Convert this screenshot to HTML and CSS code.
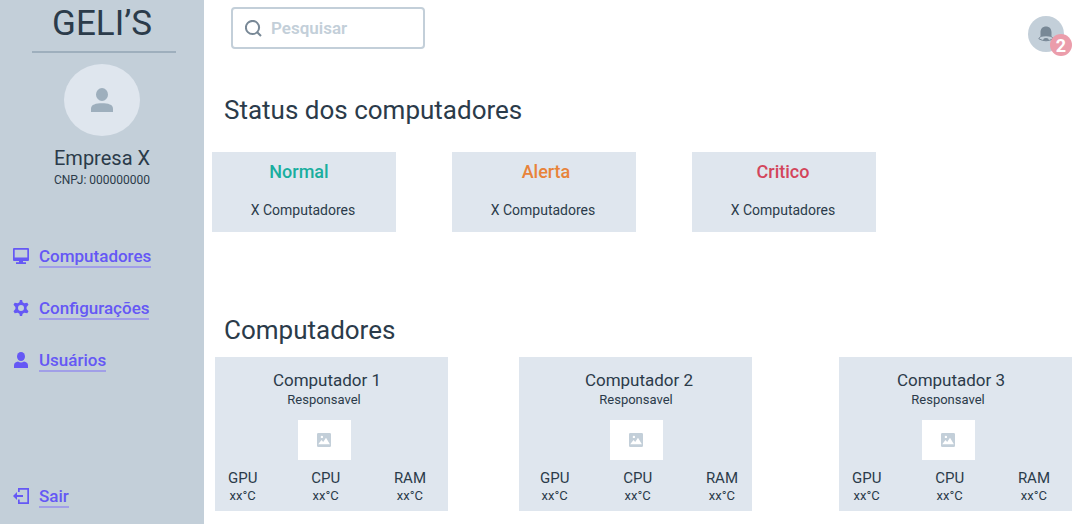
FILE: index.html
```html
<!DOCTYPE html>
<html lang="pt-BR">
<head>
<meta charset="utf-8">
<meta name="viewport" content="width=device-width, initial-scale=1">
<title>GELI’S</title>
<link rel="stylesheet" href="styles.css">
</head>
<body>
<svg class="sprite" aria-hidden="true">
  <symbol id="picture" viewBox="0 0 14 14">
    <path fill="currentColor" fill-rule="evenodd" d="M1.300 0H12.700Q14 0 14 1.300V12.700Q14 14 12.700 14H1.300Q0 14 0 12.700V1.300Q0 0 1.300 0ZM1.200 11.300H12.900L9 4.800L6.200 9L4.500 7ZM4.900 2.700A1.200 1.200 0 1 0 4.900 5.100A1.200 1.200 0 1 0 4.900 2.700Z"/>
  </symbol>
</svg>
<aside class="sidebar">
  <h1 class="brand">GELI’S</h1>
  <div class="company">
    <div class="avatar">
      <svg width="22" height="24" viewBox="0 0 22 24" aria-hidden="true"><ellipse cx="11" cy="6.500" rx="6" ry="6.500"/><path d="M0 24V20.500C0 16.500 5 15.200 11 15.200S22 16.500 22 20.500V24Z"/></svg>
    </div>
    <p class="company-name">Empresa X</p>
    <p class="company-id">CNPJ: 000000000</p>
  </div>
  <nav class="menu">
    <a class="menu-item" href="#computadores">
      <svg width="16" height="16" viewBox="0 0 16 16" aria-hidden="true"><path fill-rule="evenodd" d="M1 0H15Q16 0 16 1V12Q16 13 15 13H10V14.200H13V16H3V14.200H6V13H1Q0 13 0 12V1Q0 0 1 0ZM1.700 1.700V9.500H14.300V1.700Z"/></svg>
      <span class="menu-label">Computadores</span>
    </a>
    <a class="menu-item" href="#configuracoes">
      <svg width="16" height="16" viewBox="0 0 16 16" aria-hidden="true"><path fill-rule="evenodd" d="M6.900 0H9.100L9.600 2.300L11.300 3.300L14.300 2.700L15.500 4.800L13.600 7V9L15.500 11.200L14.300 13.300L11.300 12.700L9.600 13.700L9.100 16H6.900L6.400 13.700L4.700 12.700L1.700 13.300L.5 11.200L2.400 9V7L.5 4.800L1.700 2.700L4.700 3.300L6.400 2.300ZM8 5A3 3 0 1 0 8 11A3 3 0 1 0 8 5Z"/></svg>
      <span class="menu-label">Configurações</span>
    </a>
    <a class="menu-item" href="#usuarios">
      <svg width="16" height="16" viewBox="0 0 16 16" aria-hidden="true"><ellipse cx="8" cy="4.500" rx="4" ry="4.500"/><path d="M1 16V13.500C1 10.900 2.800 10 5 9.600Q8 11.600 11 9.600C13.200 10 15 10.900 15 13.500V16Z"/></svg>
      <span class="menu-label">Usuários</span>
    </a>
  </nav>
  <a class="menu-item logout" href="#sair">
    <svg width="16" height="16" viewBox="0 0 16 16" aria-hidden="true"><path d="M5 0H16V16H5V11.500H6.700V14.300H14.300V1.700H6.700V4H5ZM4 4V7.100H10V8.900H4V12L0 8Z"/></svg>
    <span class="menu-label">Sair</span>
  </a>
</aside>
<main class="content">
  <header class="topbar">
    <label class="search">
      <svg width="17" height="17" viewBox="0 0 17 17" aria-hidden="true"><ellipse cx="7.500" cy="7.500" rx="6.600" ry="6.600"/><path d="M12.200 12.200L16 16"/></svg>
      <input class="search-input" type="search" placeholder="Pesquisar" aria-label="Pesquisar">
    </label>
    <button class="bell" type="button" aria-label="Notificações: 2">
      <svg width="16" height="16" viewBox="0 0 16 16" aria-hidden="true"><path d="M2.500 11V6.500C2.500 2.500 4.800.5 8 .5S13.500 2.500 13.500 6.500V11Q8 9.500 2.500 11Z"/><path class="bell-rim" d="M2.500 10.500L.8 12.800Q8 16.800 15.200 12.800L13.500 10.500"/><path d="M5 13.200Q8 10.800 11 13.200Q8 16.500 5 13.200Z"/></svg>
      <span class="badge">2</span>
    </button>
  </header>
  <section>
    <h2 class="heading">Status dos computadores</h2>
    <div class="status-list">
      <article class="status"><h3 class="status-title normal">Normal</h3><p class="status-count">X Computadores</p></article>
      <article class="status"><h3 class="status-title alert">Alerta</h3><p class="status-count">X Computadores</p></article>
      <article class="status"><h3 class="status-title critical">Critico</h3><p class="status-count">X Computadores</p></article>
    </div>
  </section>
  <section id="computadores">
    <h2 class="heading">Computadores</h2>
    <div class="computer-list">
      <article class="computer">
        <h3 class="computer-name">Computador 1</h3>
        <p class="owner">Responsavel</p>
        <div class="photo"><svg width="14" height="14" aria-hidden="true"><use href="#picture"/></svg></div>
        <dl class="metrics">
          <div><dt>GPU</dt><dd>xx°C</dd></div>
          <div><dt>CPU</dt><dd>xx°C</dd></div>
          <div><dt>RAM</dt><dd>xx°C</dd></div>
        </dl>
      </article>
      <article class="computer">
        <h3 class="computer-name">Computador 2</h3>
        <p class="owner">Responsavel</p>
        <div class="photo"><svg width="14" height="14" aria-hidden="true"><use href="#picture"/></svg></div>
        <dl class="metrics">
          <div><dt>GPU</dt><dd>xx°C</dd></div>
          <div><dt>CPU</dt><dd>xx°C</dd></div>
          <div><dt>RAM</dt><dd>xx°C</dd></div>
        </dl>
      </article>
      <article class="computer">
        <h3 class="computer-name">Computador 3</h3>
        <p class="owner">Responsavel</p>
        <div class="photo"><svg width="14" height="14" aria-hidden="true"><use href="#picture"/></svg></div>
        <dl class="metrics">
          <div><dt>GPU</dt><dd>xx°C</dd></div>
          <div><dt>CPU</dt><dd>xx°C</dd></div>
          <div><dt>RAM</dt><dd>xx°C</dd></div>
        </dl>
      </article>
    </div>
  </section>
</main>
</body>
</html>
```

FILE: styles.css
```css
* {
  box-sizing: border-box;
}

body {
  display: flex;
  min-height: 100vh;
  margin: 0;
  background: #fff;
  color: #2b3b4a;
  font-family: Roboto, "Liberation Sans", sans-serif;
}

h1, h2, h3, p, dl, dd {
  margin: 0;
  font-weight: 400;
}

.sprite {
  position: absolute;
  width: 0;
  height: 0;
}

.sidebar {
  display: flex;
  flex-direction: column;
  flex: 0 0 204px;
  padding-bottom: 12px;
  background: #c3cfd9;
}

.brand {
  margin: 0 28px 0 32px;
  padding: 0 4px 3px 0;
  border-bottom: 2px solid #9eafbd;
  font-size: 35px;
  line-height: 48px;
  text-align: center;
}

.company {
  display: flex;
  flex-direction: column;
  align-items: center;
  padding-top: 11px;
}

.avatar {
  display: flex;
  align-items: center;
  justify-content: center;
  width: 76px;
  height: 72px;
  border-radius: 50%;
  background: #dfe6ee;
  fill: #9eafbd;
}

.company-name {
  margin-top: 10px;
  font-size: 20px;
  line-height: 24px;
}

.company-id {
  font-size: 12px;
  line-height: 20px;
}

.menu {
  display: flex;
  flex-direction: column;
  gap: 20px;
  margin-top: 50px;
}

.menu-item {
  display: flex;
  align-items: center;
  gap: 10px;
  height: 32px;
  padding-left: 13px;
  color: #6558f5;
  fill: currentColor;
  font-size: 17px;
  font-weight: 500;
  line-height: 20px;
  text-decoration: none;
}

.menu-label {
  padding-top: 2px;
  border-bottom: 2px solid #a19fe7;
}

.logout {
  margin-top: auto;
}

.content {
  flex: 1;
  min-width: 0;
}

.topbar {
  display: flex;
  align-items: flex-start;
  justify-content: space-between;
  padding: 7px 16px 0 27px;
}

.search {
  display: flex;
  align-items: center;
  gap: 9px;
  width: 194px;
  height: 42px;
  padding: 0 12px;
  border: 2px solid #c3cfd9;
  border-radius: 4px;
  fill: none;
  stroke: #788896;
  stroke-width: 2;
}

.search svg {
  flex: none;
}

.search-input {
  flex: 1;
  min-width: 0;
  padding: 0;
  border: 0;
  outline: 0;
  background: none;
  color: #2b3b4a;
  font: 600 17px Roboto, "Liberation Sans", sans-serif;
}

.search-input::placeholder {
  color: #c3cfd9;
  opacity: 1;
}

.bell {
  position: relative;
  display: flex;
  align-items: center;
  justify-content: center;
  width: 36px;
  height: 36px;
  margin-top: 9px;
  padding: 0;
  border: 0;
  border-radius: 50%;
  background: #c3cfd9;
  fill: #788896;
}

.bell-rim {
  fill: none;
  stroke: #788896;
}

.badge {
  position: absolute;
  right: -8px;
  bottom: -4px;
  width: 22px;
  height: 22px;
  border-radius: 50%;
  background: #eb9dab;
  color: #fff;
  font: 700 18px/24px Roboto, "Liberation Sans", sans-serif;
}

.heading {
  padding-left: 20px;
  font-size: 26px;
  line-height: 32px;
}

.content section {
  padding-top: 42px;
}

.status-list {
  display: grid;
  grid-template-columns: repeat(3, minmax(0, 1fr));
  gap: 56px;
  margin: 26px 204px 0 8px;
}

.content section + section {
  padding-top: 82px;
}

.status {
  padding: 8px 0 10px;
  background: #dfe6ee;
  text-align: center;
}

.status-title {
  font-size: 18px;
  font-weight: 500;
  line-height: 24px;
}

.normal {
  padding-right: 10px;
  color: #1aae9f;
}

.alert {
  padding-left: 4px;
  color: #e8833a;
}

.critical {
  padding-right: 2px;
  color: #d3455b;
}

.status-count {
  padding-right: 2px;
  margin-top: 14px;
  font-size: 14px;
  line-height: 24px;
}

.computer-list {
  display: flex;
  gap: 71px;
  margin-top: 11px;
  padding: 0 8px 12px 11px;
}

.computer {
  display: flex;
  flex: 1;
  flex-direction: column;
  align-items: center;
  padding: 11px 22px 5px 13px;
  background: #dfe6ee;
}

.computer:nth-child(2) {
  padding-right: 14px;
  padding-left: 21px;
}

.computer:last-child {
  margin-left: 16px;
}

.computer-name {
  font-size: 17px;
  line-height: 24px;
}

.owner {
  margin-right: 6px;
  font-size: 13px;
  line-height: 16px;
}

.photo {
  display: flex;
  align-items: center;
  justify-content: center;
  width: 53px;
  height: 40px;
  margin: 12px 6px 8px 0;
  background: #fff;
  color: #c3cfd9;
}

.metrics {
  display: flex;
  align-self: stretch;
  justify-content: space-between;
  text-align: center;
}

.metrics dt {
  font-size: 15px;
  line-height: 20px;
}

.metrics dd {
  font-size: 13px;
  line-height: 16px;
  padding-bottom: 2px;
}
```
